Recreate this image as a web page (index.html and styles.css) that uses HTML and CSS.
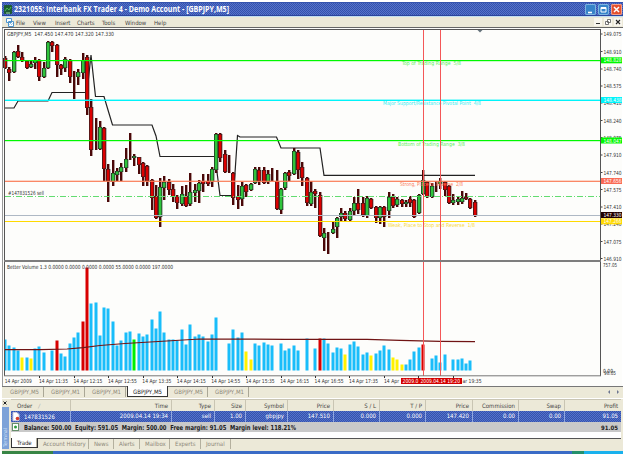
FILE: index.html
```html
<!DOCTYPE html>
<html lang="en">
<head>
    <meta charset="UTF-8">
    <title>2321055: Interbank FX Trader 4</title>
    <link rel="stylesheet" href="styles.css">
</head>
<body>
    <div class="window">
        <header class="title-bar">
            <svg class="app-icon" width="8" height="9" viewBox="0 0 8 9"><rect width="8" height="9" rx="1" fill="#1c5b32"/><path d="M1 6l2-3 2 2 2-3" fill="none" stroke="#48bd55"/><path d="M2 8h4" stroke="#a2d5ac"/></svg>
            <h1><svg width="220" height="12"><text x="0" y="9" textLength="215" lengthAdjust="spacingAndGlyphs">2321055: Interbank FX Trader 4 - Demo Account - [GBPJPY,M5]</text></svg></h1>
            <div class="win-buttons">
                <button class="win-btn"><svg width="11" height="11"><path d="M3 8.5h4" stroke="#fff" stroke-width="1.6"/></svg></button>
                <button class="win-btn"><svg width="11" height="11"><path d="M3 3.5h5v4.5H3zM3 4.5h5" fill="none" stroke="#fff"/></svg></button>
                <button class="win-btn close"><svg width="11" height="11"><path d="M3 3l5 5M8 3l-5 5" stroke="#fff" stroke-width="1.5"/></svg></button>
            </div>
        </header>

        <nav class="menu-bar">
            <svg class="doc-icon" width="9" height="9" viewBox="0 0 9 9"><path d="M1.5 .5h5v4h-5zM3.500 3.500h5v5h-5z" fill="#fff" stroke="#4e94cc"/><path d="M4.500 6.500l1-1 1 1 1-1" fill="none" stroke="#4e94cc" stroke-width=".7"/></svg>
            <span class="m-file">File</span>
            <span class="m-view">View</span>
            <span class="m-insert">Insert</span>
            <span class="m-charts">Charts</span>
            <span class="m-tools">Tools</span>
            <span class="m-window">Window</span>
            <span>Help</span>
            <div class="doc-buttons">
                <svg width="8" height="8"><path d="M2 5.500h4" stroke="#333"/></svg>
                <svg width="8" height="8"><path d="M3.500 1.500h3v3h-3zM1.500 3.500h3v3h-3z" fill="#fff" stroke="#555" stroke-width=".8"/></svg>
                <svg width="8" height="8"><path d="M2 2l4 4M6 2l-4 4" stroke="#222" stroke-width="1.1"/></svg>
            </div>
        </nav>

        <svg class="chart" id="chart" width="620" height="358" viewBox="2 28 620 358"></svg>

        <div class="chart-tabs">
            <span>GBPJPY,M5</span>
            <span>GBPJPY,M1</span>
            <span>GBPJPY,M1</span>
            <span class="active">GBPJPY,M5</span>
            <span>GBPJPY,M5</span>
            <span>GBPJPY,M1</span>
            <svg class="tab-arrows" width="14" height="6"><path d="M4 1L2 3l2 2zM11 1l2 2-2 2z" fill="#6d7690"/></svg>
        </div>

        <section class="terminal">
            <aside class="terminal-side">
                <svg width="7" height="7"><path d="M1.500 1.500l3 3M4.500 1.500l-3 3" stroke="#222"/></svg>
                <div class="side-strip">Terminal</div>
            </aside>
            <div class="terminal-main">
                <div class="row head">
                    <span>Order <i>∕</i></span><span>Time</span><span>Type</span><span>Size</span><span>Symbol</span><span>Price</span><span>S / L</span><span>T / P</span><span>Price</span><span>Commission</span><span>Swap</span><span>Profit</span>
                </div>
                <div class="row order">
                    <span><svg width="8" height="9"><path d="M1 .5h4l2 2v6H1z" fill="#fff" stroke="#ccd"/><circle cx="5.500" cy="6.500" r="1.800" fill="#d43b2c"/></svg>147831526</span><span>2009.04.14 19:34</span><span>sell</span><span>1.00</span><span>gbpjpy</span><span>147.510</span><span>0.000</span><span>0.000</span><span>147.420</span><span>0.00</span><span>0.00</span><span>91.05</span>
                </div>
                <div class="balance">
                    <svg width="7" height="8"><rect x=".5" y=".5" width="6" height="7" fill="#fff" stroke="#668f6b"/><circle cx="3.500" cy="4" r="1.500" fill="#2c9c3d"/></svg>
                    <svg class="balance-text" width="280" height="9"><text x="0" y="6.500" textLength="272" lengthAdjust="spacingAndGlyphs">Balance: 500.00&#160; Equity: 591.05&#160; Margin: 500.00&#160; Free margin: 91.05&#160; Margin level: 118.21%</text></svg>
                    <b>91.05</b>
                </div>
                <div class="blank"></div>
                <div class="bottom-tabs">
                    <span class="active">Trade</span>
                    <span class="t-history">Account History</span>
                    <span class="t-news">News</span>
                    <span class="t-alerts">Alerts</span>
                    <span class="t-mailbox">Mailbox</span>
                    <span class="t-experts">Experts</span>
                    <span class="t-journal">Journal</span>
                </div>
            </div>
        </section>
        <footer class="taskbar"><i class="start"></i><i class="tasks"></i><i class="green"></i><i class="tray"></i></footer>
    </div>

    <script src="chart.js"></script>
</body>
</html>
```
FILE: styles.css
```css
* {
    box-sizing: border-box;
    margin: 0;
    padding: 0;
}

body {
    width: 625px;
    height: 454px;
    overflow: hidden;
    background: #fff;
    font-family: "DejaVu Sans Condensed", "DejaVu Sans", sans-serif;
    font-size: 6px;
    color: #555;
}

.window {
    width: 621px;
    margin-left: 2px;
    padding-top: 2px;
}

svg {
    display: block;
    flex: none;
}

/* title bar and menu */
.title-bar {
    height: 14px;
    display: flex;
    align-items: center;
    padding-left: 2px;
    background: repeating-conic-gradient(#3453ad 0 25%, #5571ca 0 50%) 0 0 / 2px 2px;
    border-top: 1px solid #3453ae;
    border-bottom: 1px solid #2b459d;
}

.title-bar h1 {
    margin-left: 2px;
}

.title-bar text {
    font-family: "Open Sans", sans-serif;
    font-size: 8px;
    font-weight: 700;
    fill: #fff;
}

.win-buttons {
    display: flex;
    gap: 2px;
    margin-left: auto;
    padding-right: 1px;
}

.win-btn {
    width: 11px;
    height: 11px;
    border: 0;
    border-radius: 2px;
    background: #3784c9;
    box-shadow: inset 0 0 0 1px #80b5e0;
}

.win-btn.close {
    background: #e4512e;
    box-shadow: inset 0 0 0 1px #f3a08a;
}

.menu-bar {
    height: 12px;
    display: flex;
    align-items: center;
    padding-left: 3px;
    background: #ece9d8;
    border-top: 1px solid #c2dff1;
    border-bottom: 1px solid #666;
    color: #444;
}

.doc-icon { margin-right: 2px; }
.m-file { width: 17px; }
.m-view { width: 22px; }
.m-insert { width: 22px; }
.m-charts { width: 25px; }
.m-tools { width: 23px; }
.m-window { width: 29px; }

.doc-buttons {
    display: flex;
    gap: 2px;
    margin-left: auto;
    padding-right: 1px;
}

.doc-buttons svg {
    background: #f8f6ee;
}

/* chart */
.chart {
    background: #fdfdfb;
}

.chart text {
    font-family: "DejaVu Sans Condensed", "DejaVu Sans", sans-serif;
    font-size: 5.6px;
    fill: #333;
}

.chart .tag {
    fill: #fff;
}

.chart .note {
    font-size: 5.4px;
}

/* chart tabs */
.chart-tabs {
    height: 13px;
    display: flex;
    background: #ece9d8;
    border-top: 1px solid #777;
    border-bottom: 1px solid #fff;
    color: #8c8878;
}

.chart-tabs span {
    width: 41px;
    height: 10px;
    line-height: 9px;
    text-align: center;
    box-shadow: inset -1px 0 0 #ece9d8, inset -2px 0 0 #aaa796;
}

.chart-tabs span:first-child {
    width: 43px;
    padding-left: 2px;
}

.chart-tabs .active {
    margin-top: -1px;
    height: 11px;
    line-height: 11px;
    background: #fff;
    color: #222;
    border: 1px solid #333;
    border-top: 0;
    box-shadow: none;
}

.tab-arrows {
    margin: 2px 3px 0 auto;
}

/* terminal */
.terminal {
    height: 52px;
    display: flex;
    background: #ece9d8;
}

.terminal-side {
    width: 9px;
    padding-top: 1px;
}

.side-strip {
    width: 7px;
    height: 42px;
    background: #7da2d8;
    color: #d8e5f8;
    writing-mode: vertical-rl;
    transform: rotate(180deg);
    line-height: 7px;
    font-size: 5px;
    padding-top: 2px;
}

.terminal-main {
    width: 610px;
}

.row {
    display: grid;
    grid-template-columns: 60px 101px 43px 31px 42px 46px 46px 46px 47px 46px 46px 56px;
    height: 11px;
    line-height: 10px;
    text-align: right;
}

.row span {
    padding-right: 3px;
    border-right: 1px solid #c9c5b3;
    white-space: nowrap;
}

.row span:first-child {
    display: flex;
    align-items: center;
    text-align: left;
}

.head {
    height: 12px;
    border-top: 1px solid #c9c5b4;
    line-height: 11px;
    color: #444;
}

.head span:first-child {
    padding-left: 6px;
}

.head i {
    margin-left: 6px;
    color: #aaa;
}

.order {
    background: repeating-conic-gradient(#3453ad 0 25%, #5571ca 0 50%) 0 0 / 2px 2px;
    color: #fff;
}

.order span {
    border-right-color: #91a7df;
}

.row span:last-child {
    border-right: 0;
}

.order span:first-child {
    gap: 4px;
    padding-left: 1px;
}

.balance {
    height: 10px;
    display: flex;
    align-items: center;
    padding: 0 3px 0 1px;
    background: #c9c9c9;
    color: #222;
}

.balance-text {
    margin-left: 5px;
}

.balance-text text {
    font-size: 6.8px;
    font-weight: 700;
    fill: #222;
}

.balance b {
    margin-left: auto;
}

.blank {
    height: 6px;
    background: #fff;
}

.bottom-tabs {
    height: 13px;
    display: flex;
    border-top: 1px solid #555;
    line-height: 10px;
    color: #8c8878;
}

.bottom-tabs span {
    height: 10px;
    padding-left: 5px;
    white-space: nowrap;
    box-shadow: inset -1px 0 0 #b4b09e;
}

.bottom-tabs .active {
    width: 27px;
    margin-top: -1px;
    background: #fff;
    color: #222;
    border: 1px solid #333;
    border-top: 0;
}

.t-history { width: 51px; }
.t-news { width: 25px; }
.t-alerts { width: 26px; }
.t-mailbox { width: 30px; }
.t-experts { width: 31px; }
.t-journal { width: 30px; }

/* top edge of the desktop taskbar */
.taskbar {
    height: 3px;
    display: flex;
    background: #3a6ed8;
}

.start { width: 51px; background: #388545; }
.tasks { width: 519px; background: #3a6bc6; }
.green { width: 12px; background: #24906b; }
.tray { flex: 1; background: #19b1ed; }
```
FILE: chart.js
```javascript
const chart = document.getElementById('chart');
const STEP = 4.31;
const barX = i => Math.round(5 + i * STEP);

// colour, high, body top, body bottom, low
const candles = [
    'r 56 58 68 69', 'r 67 69 73 81', 'g 51 52 72 73', 'r 45 51 57 58', 'r 52 57 61 62',
    'r 60 61 68 69', 'g 61 64 67 68', 'g 57 60 63 69', 'r 59 60 77 81', 'g 62 68 77 78',
    'g 41 42 68 69', 'r 41 42 46 52', 'r 44 45 65 77', 'r 64 65 69 75', 'g 57 59 68 72',
    'r 59 60 77 83', 'd 71 71 98 99', 'g 69 72 77 85', 'g 53 60 73 79', 'r 55 57 108 115',
    'r 99 107 150 156', 'd 118 118 150 150', 'g 121 127 149 150', 'r 127 128 169 181', 'r 164 169 181 202',
    'g 160 173 182 186', 'g 168 171 175 181', 'g 163 167 172 181', 'g 148 159 168 172', 'd 133 157 159 160',
    'g 154 156 158 166', 'r 157 157 165 174', 'r 162 163 177 186', 'r 165 166 181 186', 'r 179 180 198 210',
    'r 185 196 218 219', 'g 178 187 217 227', 'g 176 182 188 200', 'r 179 182 190 195', 'r 184 189 197 202',
    'r 195 196 203 209', 'g 186 194 204 206', 'r 185 196 206 207', 'g 173 192 204 206', 'g 184 190 193 202',
    'g 180 183 191 203', 'r 174 181 184 192', 'r 174 181 184 186', 'g 167 169 182 187', 'g 133 134 170 173',
    'r 133 134 158 162', 'r 150 154 172 173', 'd 155 155 172 173', 'r 172 173 198 205', 'r 185 196 200 209',
    'g 182 186 199 206', 'r 184 185 192 197', 'g 183 184 190 191', 'g 167 169 183 184', 'r 167 170 181 185',
    'r 167 170 183 184', 'g 170 174 182 184', 'd 168 168 181 181', 'r 170 181 209 210', 'g 188 189 210 214',
    'g 172 173 188 190', 'r 170 172 176 181', 'g 148 151 174 175', 'r 150 152 170 179', 'r 162 167 178 186',
    'r 177 178 203 206', 'g 181 192 204 206', 'r 189 191 194 208', 'r 192 195 236 237', 'g 228 233 238 251',
    'd 232 232 254 254', 'g 221 229 233 234', 'g 217 218 227 238', 'g 208 213 217 221', 'r 211 213 219 221',
    'g 208 211 220 221', 'g 197 203 211 216', 'r 189 203 210 214', 'r 197 203 215 217', 'g 196 198 216 218',
    'r 198 199 208 209', 'r 206 207 218 223', 'g 206 207 218 224', 'r 206 207 217 227', 'g 192 197 211 218',
    'r 194 197 206 208', 'g 197 199 205 207', 'r 199 200 204 207', 'g 200 202 204 207', 'r 196 199 203 207',
    'r 199 200 217 218', 'g 194 195 213 214', 'g 170 180 194 195', 'r 181 182 197 198', 'g 183 186 197 198',
    'd 181 181 191 192', 'g 178 181 184 189', 'r 181 182 190 196', 'r 185 186 203 204', 'g 194 200 203 205',
    'g 196 199 202 205', 'g 191 198 202 204', 'r 193 197 199 200', 'r 198 199 208 209', 'r 200 202 216 217'
];

// bar heights in px, 0 = no bar
const volumes = [
    31, 25, 23, 20, 13, 13, 12, 22, 24, 18, 0, 20, 30, 17, 14, 27, 33, 38, 49, 103,
    67, 68, 35, 63, 62, 49, 25, 30, 38, 39, 31, 37, 34, 36, 51, 42, 59, 38, 31, 31,
    30, 41, 26, 46, 34, 36, 34, 29, 36, 53, 0, 0, 27, 41, 33, 38, 19, 11, 27, 25,
    28, 26, 25, 0, 27, 20, 22, 25, 20, 0, 32, 0, 22, 32, 32, 27, 18, 23, 22, 16,
    26, 29, 24, 16, 18, 15, 17, 20, 25, 21, 13, 11, 6, 6, 11, 19, 23, 26, 0, 12,
    15, 8, 16, 0, 11, 11, 12, 7, 10
];
const volumeColors = {
    '#fff200': [4, 6, 56, 57, 79, 85, 90, 91, 92],
    '#d80000': [12, 18, 19, 73, 97],
    '#00f000': [30]
};

const out = [];
const rect = (x, y, w, h, fill) => out.push(`<rect x="${x}" y="${y}" width="${w}" height="${h}" fill="${fill}"/>`);
const text = (x, y, str, len, cls = '', fill = '') => out.push(
    `<text x="${x}" y="${y}" textLength="${len}" lengthAdjust="spacingAndGlyphs" class="${cls}"${fill ? ` style="fill:${fill}"` : ''}>${str}</text>`);
const line = (points, stroke, w = 1) => out.push(`<polyline points="${points}" fill="none" stroke="${stroke}" stroke-width="${w}"/>`);

// price bands
line('5,108 14,108 18,101 48,101 52,92.5 87,92.5 91,55 95.5,96.5 104,96.500 108,110 112.500,125 152,125 156,136 160,156.500 215,156.500 220,195.500 233,195.500 235,173 237.500,135.500 240,137 276.500,137 281,148 320,148 324,175.300 475,175.300', '#222', 1.2);

candles.forEach((c, i) => {
    const [color, high, top, bottom, low] = c.split(' ').map((v, n) => n ? +v : v);
    const x = barX(i);
    rect(x - 1, high, 2.4, low - high, '#4a0808');
    if (color === 'd') return;
    rect(x - 2, top, 4.3, bottom - top, '#222');
    rect(x - 1.3, top + .5, 2.8, Math.max(1, bottom - top - 1), color === 'r' ? '#dc0000' : '#2fc43c');
});

// volume
volumes.forEach((h, i) => {
    if (!h) return;
    const found = Object.keys(volumeColors).find(k => volumeColors[k].includes(i));
    const x = i ? barX(i) - 1.5 : 5;
    rect(x, 370.5 - h, i ? 3 : 1.5, h, found || '#19bdfa');
});
line('5,349.700 40,349.700 67,349 83,347.700 100,345.500 125,343.500 150,342 175,340.500 200,339 285,339.300 367,339.300 400,340.300 440,341.300 475,341.700', '#701414', 1.2);

// levels
rect(5, 60, 596, 1.2, '#00f800');
rect(5, 99.6, 596, 1.4, '#00f4fa');
rect(5, 140, 596, 1.2, '#00f800');
rect(5, 180.7, 596, 1.2, '#fa7a55');
rect(5, 215, 596, 1, '#aeb8c4');
rect(5, 221, 596, 1, '#ffd900');
out.push('<path d="M5 196.500h596" stroke="#62dc70" stroke-dasharray="6 2 1 2"/>');

text(402, 65, 'Top of Trading Range&#160; 5/8', 59, 'note', '#5af05a');
text(383, 105, 'Major Support/Resistance Pivotal Point&#160; 4/8', 98, 'note', '#35eef4');
text(398, 146, 'Bottom of Trading Range&#160; 3/8', 67, 'note', '#5af05a');
text(400, 186, 'Strong, Place to Reverse&#160; 2/8', 63, 'note', '#fa805d');
text(388, 227, 'Weak, Place to Stop and Reverse&#160; 1/8', 87, 'note', '#f8d83c');

text(7, 35.700, 'GBPJPY,M5&#160; 147.450 147.470 147.320 147.330', 107);
text(8, 195, '#147831526 sell', 36);
text(7, 268.800, 'Better Volume 1.3 0.0000 0.0000 0.0000 0.0000 55.0000 0.0000 197.0000', 166);

rect(423, 30, 1, 346, '#f45757');
rect(440, 30, 1, 346, '#f45757');
out.push('<path d="M477.500 30h5l-2.500 2.500z" fill="#66737c"/>');

// frames
rect(2, 28, 1, 358, '#999');
rect(4, 29, 597, 1, '#555');
rect(4, 29, 1, 347, '#555');
rect(600, 29, 1, 347, '#555');
rect(4, 260, 597, 2, '#7d7d7d');
rect(4, 375.300, 597, 1, '#777');

// price scale
const prices = [[149.075, 34], [148.91, 51.5], [148.74, 69], [148.575, 86], [148.41, 103], [148.24, 120.5], [148.075, 137.5],
    [147.91, 155], [147.74, 172.5], [147.575, 189.5], [147.41, 207], [147.24, 224], [147.075, 241.5], [146.91, 258.5]];
prices.forEach(([value, y]) => {
    rect(601, y - .5, 1.5, 1, '#444');
    text(603.5, y + 2, value.toFixed(3), 18);
});
const tags = [['148.828', 60.3, '#00f800'], ['148.438', 100, '#00f4fa'], ['148.047', 140.5, '#00f800'],
    ['147.656', 181, '#fa6a55'], ['147.266', 221.3, '#ffd900'], ['147.330', 215, '#200']];
tags.forEach(([value, y, fill]) => {
    rect(601, y - 3, 21, 6, fill);
    text(603.5, y + 2, value, 18, 'tag');
});
text(603, 267, '757.05', 14);
text(603, 372.500, '0.00', 10);
text(604, 374.500, '98.05', 12);

// time scale
text(4.7, 383, '14 Apr 2009', 27);
['11:35', '12:15', '12:55', '13:35', '14:15', '14:55', '15:35', '16:15', '16:55', '17:35'].forEach((t, i) => {
    const x = 39.400 + i * 34.450;
    rect(Math.round(x), 376, 1, 2, '#333');
    text(x - .4, 383, '14 Apr ' + t, 29);
});
rect(384, 376, 1, 2, '#333');
text(384, 383, '14 Apr', 15);
rect(418, 376, 1, 2, '#333');
rect(453, 376, 1, 2, '#333');
text(462.500, 383, 'ar 19:35', 19);
rect(401, 378, 61, 6, '#d40000');
text(402.500, 382.900, '2009.0', 16, 'tag');
text(420.500, 382.900, '2009.04.14 19:20', 39.500, 'tag');

chart.innerHTML = out.join('');
```
